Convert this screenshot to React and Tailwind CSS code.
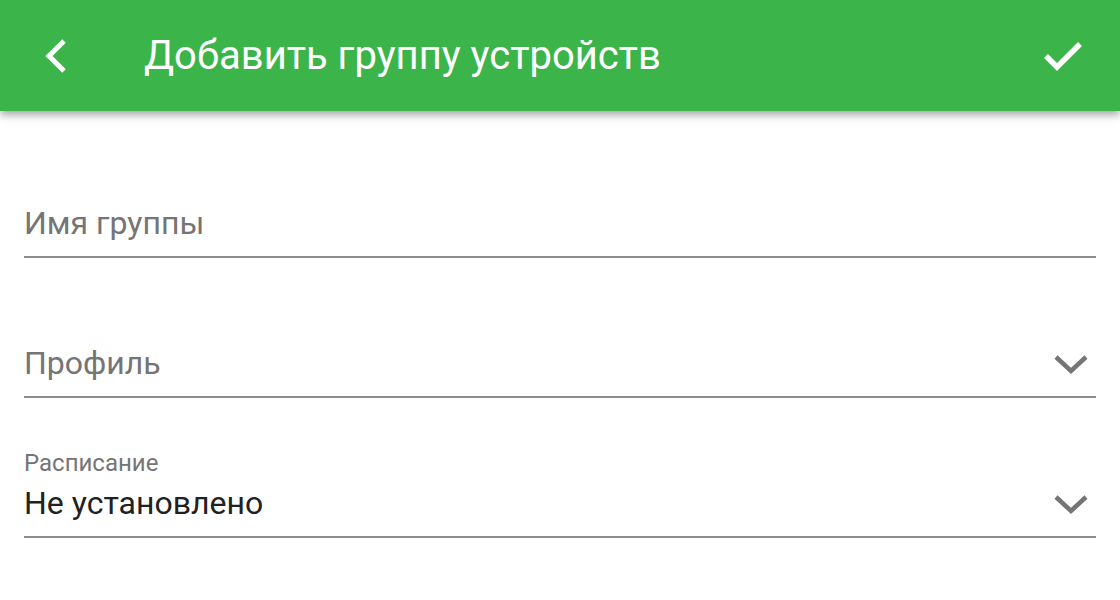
const ChevronDown = () => (
  <svg width="38" height="36" viewBox="0 0 38 36" className="text-[#757575]">
    <path d="M4 11 L19 25 L34 11" fill="none" stroke="currentColor" strokeWidth="4.5" />
  </svg>
);

const Field = ({ label, value, select }) => (
  <div className="flex items-end border-b-2 border-[#8c8c8c] h-[140px] pb-[13px]">
    <div className="flex-1 min-w-0">
      {value ? (
        <>
          <div className="text-[24px] leading-[28px] mb-[6px] text-[#757575]">{label}</div>
          <div className="text-[32px] leading-[40px] text-[#212121]">{value}</div>
        </>
      ) : (
        <div className="text-[32px] leading-[40px] text-[#757575]">{label}</div>
      )}
    </div>
    {select && (
      <div className="mb-[1px] mr-[6px]">
        <ChevronDown />
      </div>
    )}
  </div>
);

const App = () => {
  return (
    <div className="w-[1120px] h-[600px] bg-white overflow-hidden" style={{ fontFamily: 'Roboto, sans-serif' }}>
      {/* Top bar */}
      <div className="relative z-10 h-[111px] bg-[#3bb54a] flex items-center shadow-[0_4px_8px_rgba(0,0,0,0.35)]">
        <button className="w-[112px] h-full flex items-center pl-[38px]">
          <svg width="36" height="40" viewBox="0 0 36 40">
            <path d="M26 5 L11 20 L26 35" fill="none" stroke="white" strokeWidth="5" />
          </svg>
        </button>
        <h1 className="flex-1 pl-[32px] text-white text-[40px] leading-none">Добавить группу устройств</h1>
        <button className="w-[112px] h-full flex items-center justify-center pr-[2px] pt-[3px]">
          <svg width="40" height="32" viewBox="0 0 40 32">
            <path d="M3 15 L14 26 L37 3" fill="none" stroke="white" strokeWidth="5.5" />
          </svg>
        </button>
      </div>

      {/* Form */}
      <div className="px-[24px] mt-[7px]">
        <Field label="Имя группы" />
        <Field label="Профиль" select />
        <Field label="Расписание" value="Не установлено" select />
      </div>
    </div>
  );
};

export default App;
